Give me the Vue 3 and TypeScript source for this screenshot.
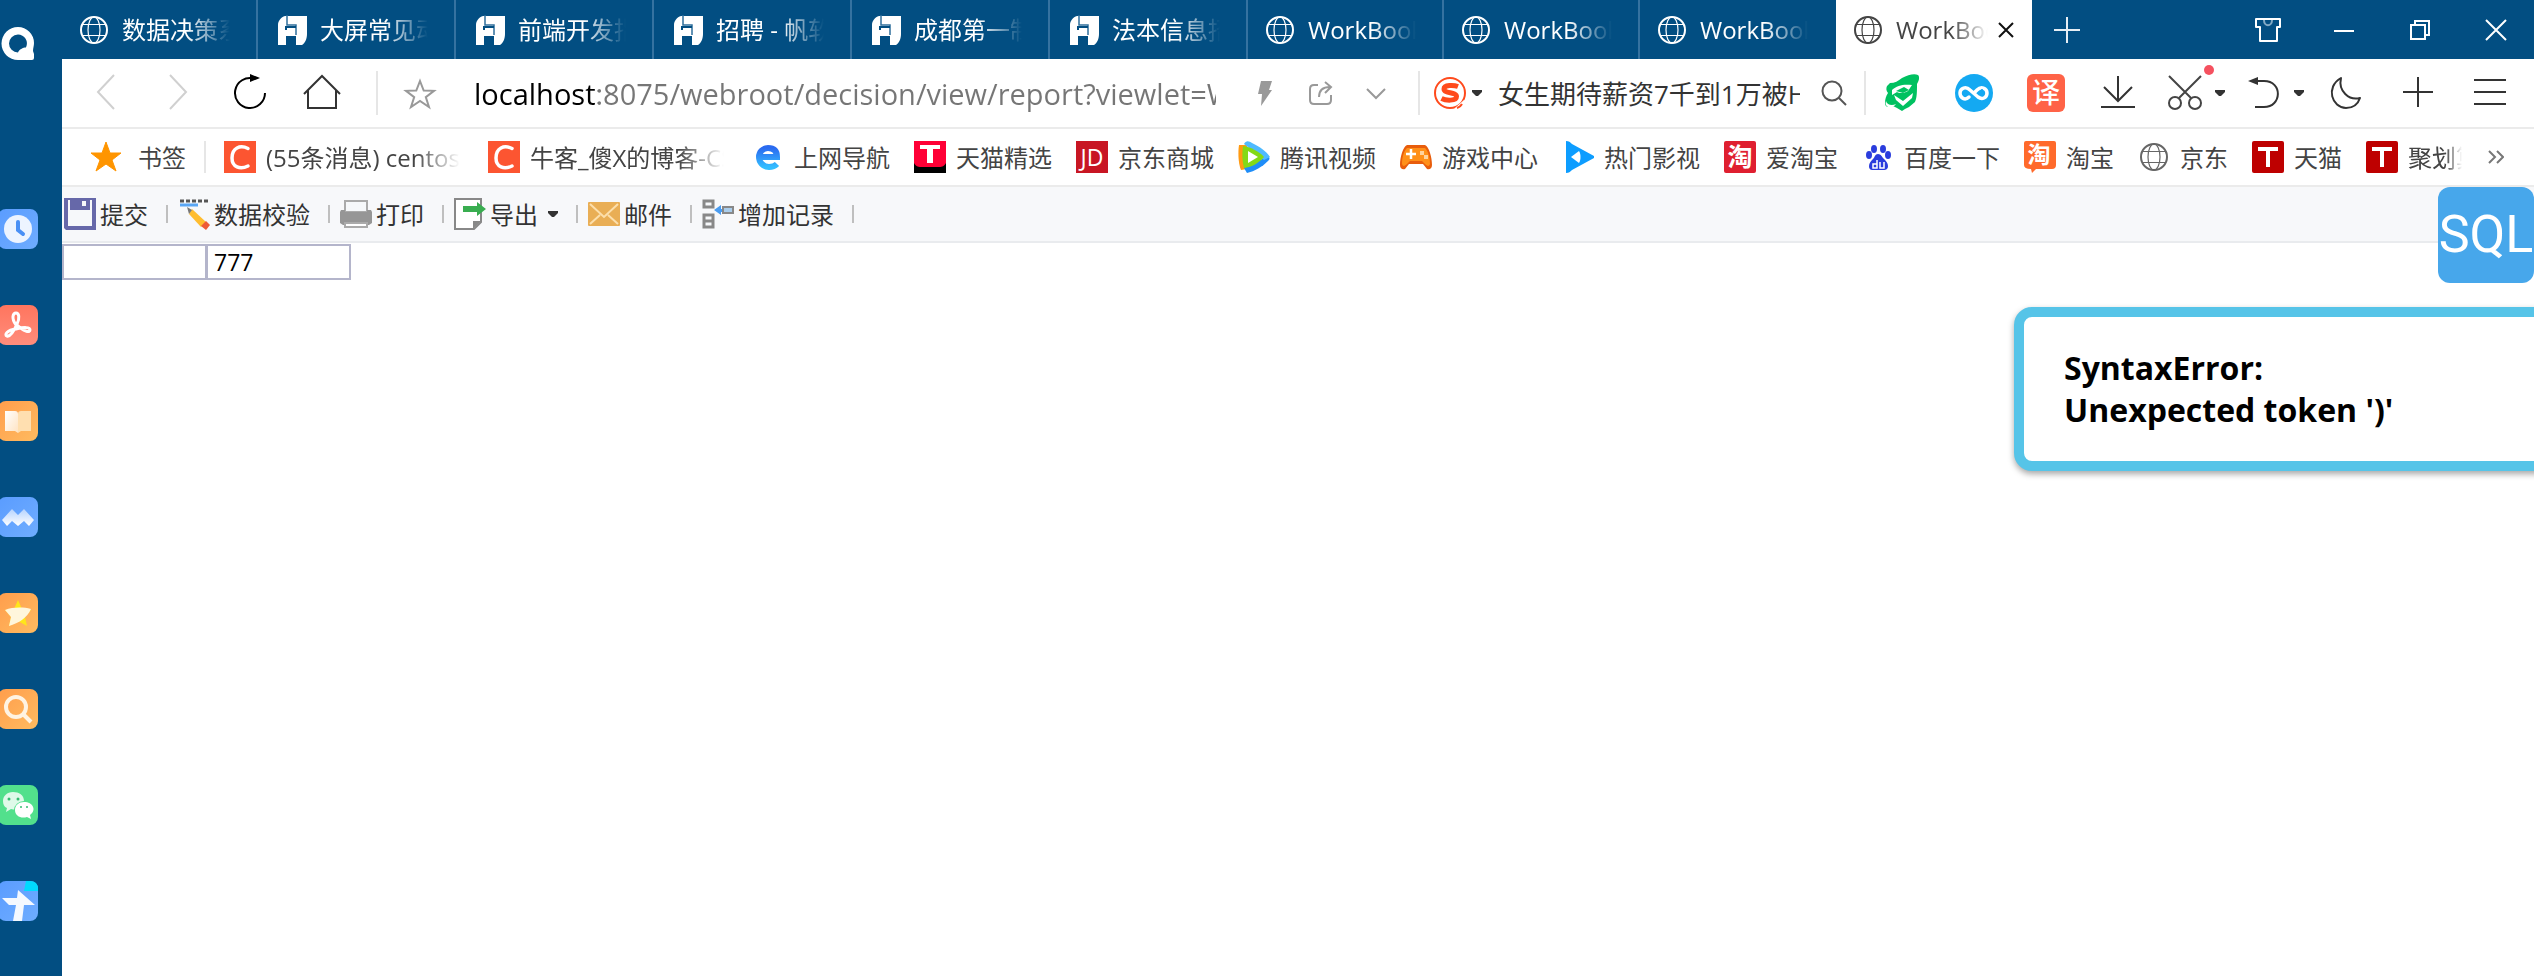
<script setup lang="ts">
import { ref } from 'vue'

interface Tab { icon: string; title: string; wide: boolean; active?: boolean }
interface Entry { icon: string; label: string }

const tabs: Tab[] = [
  { icon: 'globe', title: '数据决策系统', wide: false },
  { icon: 'fan', title: '大屏常见动画', wide: true },
  { icon: 'fan', title: '前端开发指南', wide: true },
  { icon: 'fan', title: '招聘 - 帆软', wide: true },
  { icon: 'fan', title: '成都第一制造', wide: true },
  { icon: 'fan', title: '法本信息招聘', wide: true },
  { icon: 'globe', title: 'WorkBook1', wide: false },
  { icon: 'globe', title: 'WorkBook1', wide: false },
  { icon: 'globe', title: 'WorkBook1', wide: false },
  { icon: 'globe', title: 'WorkBook1', wide: false, active: true },
]

const bookmarks: Entry[] = [
  { icon: 'csdn', label: '(55条消息) centos7' },
  { icon: 'csdn', label: '牛客_傻X的博客-CSDN' },
  { icon: 'edge', label: '上网导航' },
  { icon: 'tmall-pick', label: '天猫精选' },
  { icon: 'jd', label: '京东商城' },
  { icon: 'tencent', label: '腾讯视频' },
  { icon: 'game', label: '游戏中心' },
  { icon: 'movie', label: '热门影视' },
  { icon: 'ai-tao', label: '爱淘宝' },
  { icon: 'baidu', label: '百度一下' },
  { icon: 'taobao', label: '淘宝' },
  { icon: 'globe-sm', label: '京东' },
  { icon: 'tmall', label: '天猫' },
  { icon: 'tmall', label: '聚划算' },
]

const actions: Entry[] = [
  { icon: 'save', label: '提交' },
  { icon: 'verify', label: '数据校验' },
  { icon: 'print', label: '打印' },
  { icon: 'export', label: '导出' },
  { icon: 'mail', label: '邮件' },
  { icon: 'append', label: '增加记录' },
]

const sideApps: Entry[] = [
  { icon: 'clock', label: '历史' },
  { icon: 'pdf', label: 'PDF' },
  { icon: 'book', label: '阅读' },
  { icon: 'wave', label: '文档' },
  { icon: 'fav', label: '收藏' },
  { icon: 'find', label: '搜索' },
  { icon: 'wechat', label: '微信' },
  { icon: 'bird', label: '应用' },
]

const address = ref('localhost:8075/webroot/decision/view/report?viewlet=WorkBook1.cpt')
const query = ref('女生期待薪资7千到1万被HR')
const cells = ref<string[]>(['', '777'])
</script>

<template>
  <svg class="sprite" aria-hidden="true">
    <defs>
      <linearGradient id="g-blue" x1="0" y1="0" x2="1" y2="1"><stop offset="0" stop-color="#5a9cff" /><stop offset="1" stop-color="#6fadff" /></linearGradient>
      <linearGradient id="g-red" x1="0" y1="0" x2="0" y2="1"><stop offset="0" stop-color="#ff755e" /><stop offset="1" stop-color="#ff8d7c" /></linearGradient>
      <linearGradient id="g-orange" x1="0" y1="0" x2="1" y2="1"><stop offset="0" stop-color="#ff9d4c" /><stop offset="1" stop-color="#ffbb60" /></linearGradient>
      <linearGradient id="g-white" x1="0" y1="0" x2="1" y2="1"><stop offset="0" stop-color="#fff" /><stop offset="1" stop-color="#ffe3c2" /></linearGradient>
      <linearGradient id="g-edge" x1="0" y1="0" x2="0" y2="1"><stop offset="0" stop-color="#2a6af0" /><stop offset="1" stop-color="#35bdff" /></linearGradient>
      <linearGradient id="g-wave" x1="0" y1="0" x2="0" y2="1"><stop offset="0" stop-color="#b5d3ff" /><stop offset="1" stop-color="#fff" /></linearGradient>
    </defs>

    <symbol id="globe" viewBox="0 0 32 32">
      <g fill="none" stroke="currentColor"><circle cx="16" cy="16" r="13" stroke-width="2" /><g stroke-width="1.2"><ellipse cx="16" cy="16" rx="6" ry="13" /><path d="M5 10.5h22M5 21.5h22" /></g></g>
    </symbol>
    <symbol id="globe-sm" viewBox="0 0 32 32">
      <g fill="none" stroke="#666"><circle cx="16" cy="16" r="13" stroke-width="2" /><g stroke-width="1.2"><ellipse cx="16" cy="16" rx="6" ry="13" /><path d="M5 10.5h22M5 21.5h22" /></g></g>
    </symbol>
    <symbol id="fan" viewBox="0 0 32 32">
      <path fill="#fff" d="M9 2h22v18c0 5-2 9-5 11h-6V22H10v9H2V11C2 7 5 3 9 2z" />
      <path fill="none" stroke="#2f6f9c" stroke-width="1.5" d="M11 1v10h9v10" />
      <path fill="#024e82" d="M9 12h11v2h-9v2H9z" />
    </symbol>
    <symbol id="q" viewBox="0 0 34 34">
      <path fill="#fff" fill-rule="evenodd" d="M17 0a16 16 0 0 1 16 16c0 3-1 5-1 8l1 3v4q0 2-2 2H17A16 16 0 0 1 17 0zM17 7.500a9 9 0 1 0 0 18c1-3 5-5 8-5a9 9 0 0 0-8-13z" />
    </symbol>

    <symbol id="back" viewBox="0 0 40 40"><path fill="none" stroke="#d0d0d0" stroke-width="2" d="M28 2 12 19l16 17" /></symbol>
    <symbol id="forward" viewBox="0 0 40 40"><path fill="none" stroke="#d0d0d0" stroke-width="2" d="M12 2l16 17-16 17" /></symbol>
    <symbol id="reload" viewBox="0 0 40 40"><path fill="none" stroke="#000" stroke-width="2" d="M24 5.500A15 15 0 1 0 35 20" /><path d="M20 1v8l10-4z" /></symbol>
    <symbol id="home" viewBox="0 0 40 40"><path fill="none" stroke="#333" stroke-width="2" d="M2 21 20 3l18 18M6 17v18h28V17" /></symbol>
    <symbol id="star-o" viewBox="0 0 40 40"><path fill="none" stroke="#999" stroke-width="2" d="M20 8l3.700 9.500 10.300.3-8.200 6.300L29 34l-9-6-9 6 3.200-9.900L6 17.800l10.300-.3z" /></symbol>
    <symbol id="bolt" viewBox="0 0 40 40"><path fill="#999" d="M17 8h11l-3 9h3L17 33l1-12h-4z" /></symbol>
    <symbol id="share" viewBox="0 0 40 40"><path fill="none" stroke="#999" stroke-width="2" d="M18 12h-4q-4 0-4 4v11q0 4 4 4h13q4 0 4-4v-5M19 24c0-7 4-10 11-10M25 9l6 5-6 6" /></symbol>
    <symbol id="chev" viewBox="0 0 40 40"><path fill="none" stroke="#999" stroke-width="2" d="M11 16l9 9 9-9" /></symbol>
    <symbol id="caret" viewBox="0 0 10 6"><path fill="#333" d="M0 0h10v2L6 6H4L0 2z" /></symbol>
    <symbol id="sogou" viewBox="0 0 32 32">
      <circle cx="16" cy="16" r="15" fill="none" stroke="#ff4a1c" stroke-width="2" /><path stroke="#fff" stroke-width="3" d="M22 32l9-8" />
      <path fill="none" stroke="#ff4a1c" stroke-width="5" d="M24 9.500c-4-1.500-14-2-14 2.500 0 5 12.500 2.500 12.500 7.500 0 5-11 4-15 2" /><path stroke="#ff4a1c" stroke-width="2" d="M23 31c3-1 4-2 5-4" />
    </symbol>
    <symbol id="lens" viewBox="0 0 40 40"><g fill="none" stroke="#555" stroke-width="2"><circle cx="18" cy="18" r="9.500" /><path d="M25 25l7 7" /></g></symbol>
    <symbol id="guard" viewBox="0 0 40 40">
      <path fill="#00c160" d="M5 13l3-3c5 0 8-2 12-5 6-3 12-5 16-3 2 2 1 6-1 9 0 7 0 14-2 18l-6 5-4 2-3 2-5-3-4-2c-5 2-8 1-8-3 0-4 1-7 3-10-2-2-2-5-1-7z" />
      <path fill="#fff" d="M10 17c5-5 12-6 20-5l-4 6c-3 2-8 3-11 1l-5 3zM12 22l9 6 10-8-1 5-9 8-7-6zM4 28c1 4 6 5 10 3-2 3-6 4-8 3s-3-3-2-6z" /><path fill="#00c160" d="M14 18l8-4 5 3-6 3z" />
    </symbol>
    <symbol id="infinity" viewBox="0 0 40 40">
      <circle cx="20" cy="20" r="19" fill="#14a9f2" />
      <path fill="none" stroke="#fff" stroke-width="3.500" stroke-linecap="round" d="M15 24c-4 4-9 1-9-4s6-7 10-3l8 7c4 3 9 1 9-4s-6-7-10-3l-2 2" /><circle cx="28" cy="17" r="1" fill="#14a9f2" />
    </symbol>
    <symbol id="translate" viewBox="0 0 40 40">
      <rect x="1" y="1" width="38" height="38" rx="6" fill="#ff6347" /><text x="20" y="30" font-size="28" font-weight="500" text-anchor="middle" fill="#fff">译</text>
    </symbol>
    <symbol id="download" viewBox="0 0 40 40"><path fill="none" stroke="#333" stroke-width="2" d="M20 3v25M6 14l14 14 14-14M3 34h34" /></symbol>
    <symbol id="scissors" viewBox="0 0 40 40"><g fill="none" stroke="#444" stroke-width="2"><path d="M4 3l22 22M36 3 14 25" /><circle cx="10" cy="30" r="6" /><circle cx="30" cy="30" r="6" /></g></symbol>
    <symbol id="undo" viewBox="0 0 40 40"><path fill="none" stroke="#333" stroke-width="2" d="M9 8h11c19 0 18 26 0 26h-9" /><path fill="#333" d="M4 8l10-4v8z" /></symbol>
    <symbol id="moon" viewBox="0 0 40 40"><path fill="none" stroke="#333" stroke-width="2" stroke-linejoin="round" d="M15 5C-1 14 6 35 20 35c8 0 12-4 14-10-11 3-22-7-19-20z" /></symbol>
    <symbol id="plus" viewBox="0 0 40 40"><path fill="none" stroke="#333" stroke-width="2" d="M20 4v30M5 19h30" /></symbol>
    <symbol id="menu" viewBox="0 0 40 40"><path fill="none" stroke="#333" stroke-width="2" d="M4 7h32M4 19h32M4 31h32" /></symbol>

    <symbol id="new-tab" viewBox="0 0 32 32"><path stroke="#e6eef4" stroke-width="2" d="M16 3v26M3 16h26" /></symbol>
    <symbol id="cross" viewBox="0 0 16 16"><path stroke="#111" stroke-width="2" d="M1 1l14 14M15 1 1 15" /></symbol>
    <symbol id="shirt" viewBox="0 0 32 32"><path fill="none" stroke="#fff" stroke-width="2" stroke-linejoin="round" d="M4 5h24v8h-3v14H8V13H4z" /><path fill="none" stroke="#82a9c4" stroke-width="2" d="M12 6c0 7 8 7 8 0" /></symbol>
    <symbol id="min" viewBox="0 0 32 32"><path stroke="#fff" stroke-width="2" d="M6 17h20" /></symbol>
    <symbol id="restore" viewBox="0 0 32 32"><path fill="none" stroke="#fff" stroke-width="2" d="M7 11h14v14H7zM11 10V7h14v14h-3" /></symbol>
    <symbol id="close" viewBox="0 0 32 32"><path stroke="#fff" stroke-width="2" d="M6 6l20 20M26 6 6 26" /></symbol>

    <symbol id="star" viewBox="0 0 32 32"><path fill="#ff9500" stroke="#ff9500" stroke-linejoin="round" d="M16 1l4 11h11l-9 7 4 11-10-7-10 7 4-11-9-7h11z" /></symbol>
    <symbol id="csdn" viewBox="0 0 32 32"><path fill="#fc5531" d="M0 0h32v32H0z" /><path fill="none" stroke="#fff" stroke-width="3.500" stroke-linecap="round" d="M24 7.500C16 3.500 8 7 8 17c0 9 8 12 16 8" /></symbol>
    <symbol id="edge" viewBox="0 0 32 32"><path fill="none" stroke="url(#g-edge)" stroke-width="6" d="M8 16h17c0-7-4-9-9-9s-9 4-9 9 4 10 10 10c4 0 6-1 8-3" /></symbol>
    <symbol id="tmall-pick" viewBox="0 0 32 32"><path fill="#ff0036" d="M0 0h32v32H0z" /><path d="M0 22c2 4 5 4 8 4h16c3 0 6 0 8-4v10H0z" /><path fill="#fff" d="M6 4h20v4h-7v14h-6V8H6z" /></symbol>
    <symbol id="jd" viewBox="0 0 32 32"><path fill="#c81623" d="M0 0h32v32H0z" /><text x="16" y="25" font-size="23" text-anchor="middle" fill="#fff">JD</text></symbol>
    <symbol id="tencent" viewBox="0 0 32 32">
      <path fill="#ff9a12" d="M1 4l8 0v24l-6 1C0 22 0 10 1 4z" /><path fill="#1f8df8" d="M6 27l24-12c2 2 2 3 0 5-6 6-13 10-21 12z" /><path fill="#4fbaff" d="M6 3c2-4 5-3 8-1 8 4 14 8 18 14l-6 3z" /><path fill="#83d916" d="M5 5c7 1 16 5 21 11-5 6-12 10-20 11C4 20 4 12 5 5z" /><path fill="#fff" d="M10 10l10 6-10 6z" />
    </symbol>
    <symbol id="game" viewBox="0 0 32 32">
      <path fill="#e85d0c" d="M7 4h18c4 2 7 12 7 20 0 4-3 5-5 4l-4-5H9l-4 5c-2 1-5 0-5-4C0 16 3 6 7 4z" /><path fill="#ff9019" d="M7 7h18c3 3 5 9 5 16-1 3-3 2-5 0l-3-3H10l-3 3c-2 2-4 3-5 0C2 16 4 10 7 7z" /><path stroke="#fff" stroke-width="2.500" d="M11 8v10M6 13h10" /><path fill="#ffd39d" d="M20 10h4v4h-4zM24 14h4v4h-4z" />
    </symbol>
    <symbol id="movie" viewBox="0 0 32 32"><path fill="#0d9dff" d="M4 0c3 0 4 1 6 3l22 12v2L10 29c-2 2-3 3-6 3z" /><path fill="#fff" d="M9 16l8-6c2 3 2 9 0 12z" /></symbol>
    <symbol id="ai-tao" viewBox="0 0 32 32"><rect width="32" height="32" rx="2" fill="#df1f30" /><text x="16" y="25" font-size="25" font-weight="700" text-anchor="middle" fill="#fff">淘</text></symbol>
    <symbol id="baidu" viewBox="0 0 32 32">
      <g fill="#2b3ddd"><ellipse cx="12" cy="8" rx="3" ry="4" /><ellipse cx="21" cy="8" rx="3" ry="4" /><ellipse cx="7" cy="14" rx="3" ry="4" /><ellipse cx="26" cy="14" rx="3" ry="4" /><path d="M16 13c3 0 4 3 6 5s4 4 4 7c0 5-5 4-10 4s-9 1-9-4c0-3 2-5 4-7s2-5 5-5z" /></g>
      <path fill="none" stroke="#fff" stroke-width="1.500" d="M15 19v8h-4v-4h4M18 21v6h4v-6" />
    </symbol>
    <symbol id="taobao" viewBox="0 0 32 32"><path fill="#ff6a2b" d="M2 0h28q2 0 2 2v22q0 4-4 4H12l-4 4-1-4q-7 0-7-4V2q0-2 2-2z" /><text x="15" y="22" font-size="23" font-weight="700" text-anchor="middle" fill="#fff">淘</text></symbol>
    <symbol id="tmall" viewBox="0 0 32 32"><rect width="32" height="32" rx="2" fill="#be0000" /><path fill="#fff" d="M6 6h20v4h-8v16h-4V10H6z" /></symbol>
    <symbol id="more" viewBox="0 0 16 16"><path fill="none" stroke="#777" stroke-width="2" d="M1 2l6 6-6 6M9 2l6 6-6 6" /></symbol>

    <symbol id="save" viewBox="0 0 32 32"><path fill="#6668a9" d="M1 0h31v32H2l-2-2V0z" /><path fill="#f6f8fa" d="M4 2h2v10h20V2h2v26H4z" /><path fill="#6668a9" d="M6 0h20v9l-3 3H9l-3-3z" /><path fill="#f6f8fa" d="M18 3h4v5h-4z" /></symbol>
    <symbol id="verify" viewBox="0 0 32 32"><path stroke="#555" stroke-width="3" stroke-dasharray="4 2" d="M2 3h28" /><path stroke="#5aa7f5" stroke-width="3" d="M2 7h18" /><path fill="#ffbd2f" d="M14 11l14 13-5 5-12-13z" /><path fill="#777" d="M9 9l5 3-3 4z" /><path fill="#ed5b37" d="M28 23l4 4-4 5-5-4z" /></symbol>
    <symbol id="print" viewBox="0 0 32 32"><path fill="#f6f8fa" stroke="#aaa" stroke-width="2" d="M5 3h22v11H5z" /><path fill="#969696" d="M1 12h4v2h22v-2h4l1 2v11l-3 2H3l-3-2V14z" /><path fill="#fff" stroke="#aaa" stroke-width="2" d="M5 25h22v4H5z" /></symbol>
    <symbol id="export" viewBox="0 0 32 32"><path fill="#fff" stroke="#888" stroke-width="2" d="M1 1h26v23l-7 7H1z" /><path fill="#888" d="M27 23h-8v8z" /><path fill="#39ad50" d="M9 8h14V4l9 7-9 7v-4H9z" /></symbol>
    <symbol id="mail" viewBox="0 0 32 32"><rect y="4" width="32" height="24" rx="1" fill="#e9ae55" /><path fill="none" stroke="#fcdfac" stroke-width="2" d="M2 6l14 13L30 6M2 26l10-9M30 26l-10-9" /></symbol>
    <symbol id="append" viewBox="0 0 32 32"><g fill="#f6f8fa" stroke="#888" stroke-width="3"><path d="M2 3h9v6H2zM2 17h9v12H2zM2 23h9" /></g><path fill="#4a9cf0" d="M12 12l7-5v4h3v3h-3v3z" /><path fill="#a9cdec" stroke="#888" stroke-width="2" d="M21 9h10v6H21z" /></symbol>

    <symbol id="clock" viewBox="0 0 40 40"><rect width="40" height="40" rx="8" fill="url(#g-blue)" /><circle cx="20" cy="20" r="14" fill="#edf4ff" /><path fill="none" stroke="#4a90f5" stroke-width="4" stroke-linecap="round" d="M20 13v8l5 4" /></symbol>
    <symbol id="pdf" viewBox="0 0 40 40"><rect width="40" height="40" rx="8" fill="url(#g-red)" /><path fill="none" stroke="#fff" stroke-width="3" d="M18 20c-5-7-3-12 0-12s4 5 1 11C16 26 12 32 9 31s0-6 9-7c8-2 14-2 14 1s-6 2-14-6" /></symbol>
    <symbol id="book" viewBox="0 0 40 40"><rect width="40" height="40" rx="8" fill="url(#g-orange)" /><path fill="url(#g-white)" d="M7 10h10q3 0 3 3v19l-3-2H7z" /><path fill="#ffdfb0" d="M33 10H23q-3 0-3 3v19l3-2h10z" /></symbol>
    <symbol id="wave" viewBox="0 0 40 40"><rect width="40" height="40" rx="8" fill="url(#g-blue)" /><path fill="url(#g-wave)" d="M4 23l10-11 6 6 6-6 10 11-5 6-5-5-6 5-6-5-5 5z" /></symbol>
    <symbol id="fav" viewBox="0 0 40 40"><rect width="40" height="40" rx="8" fill="url(#g-orange)" /><path fill="#ffe51a" d="M20 7l4 9 9 1-6 7 2 9-9-5-9 5 2-9-6-7 9-1z" /><path fill="#fff6dc" d="M7 17c8-3 18-3 26-1-4 9-12 14-22 17l2-9z" /></symbol>
    <symbol id="find" viewBox="0 0 40 40"><rect width="40" height="40" rx="8" fill="url(#g-orange)" /><g fill="none" stroke="#fff3e2" stroke-width="4"><circle cx="18" cy="18" r="10" /><path d="M25 25l8 8" /></g></symbol>
    <symbol id="wechat" viewBox="0 0 40 40"><rect width="40" height="40" rx="8" fill="#52e08c" /><path fill="#dff9e9" d="M15 7c-6 0-10 4-10 9 0 3 1 6 4 7l-1 4 5-3c8 2 13-2 13-8s-5-9-11-9z" /><ellipse cx="26" cy="25" rx="10" ry="9" fill="#52e08c" /><path fill="#fff" d="M26 17c-5 0-9 3-9 8 0 6 6 9 12 7l4 2-1-4c7-5 3-13-6-13z" /><g fill="#35bd70"><circle cx="11" cy="14" r="1.500" /><circle cx="20" cy="14" r="1.500" /><circle cx="23" cy="22" r="1" /><circle cx="29" cy="22" r="1" /></g></symbol>
    <symbol id="bird" viewBox="0 0 40 40"><rect width="40" height="40" rx="8" fill="url(#g-blue)" /><path fill="#00daff" d="M28 0h4q8 0 8 8v2H26z" /><path fill="#f5f9ff" d="M20 9l17 15H26l-2 16h-9l3-16h-7l-7-7h15z" /></symbol>
  </svg>

  <div class="browser">
    <nav class="side" aria-label="侧边栏">
      <a class="logo" href="#" aria-label="主页"><svg><use href="#q" /></svg></a>
      <button v-for="a in sideApps" :key="a.icon" class="app-btn" type="button" :aria-label="a.label"><svg><use :href="'#' + a.icon" /></svg></button>
    </nav>

    <div class="window">
      <header class="tabbar">
        <button v-for="(t, i) in tabs" :key="i" type="button" class="tab" :class="{ wide: t.wide, active: t.active }">
          <svg class="i32"><use :href="'#' + t.icon" /></svg>
          <span class="tab-title">{{ t.title }}</span>
          <svg v-if="t.active" class="i16"><use href="#cross" /></svg>
        </button>
        <button class="add-tab" type="button" aria-label="新建标签页"><svg class="i32"><use href="#new-tab" /></svg></button>
        <div class="win-controls">
          <button v-for="c in ['shirt', 'min', 'restore', 'close']" :key="c" type="button" :aria-label="c"><svg class="i32"><use :href="'#' + c" /></svg></button>
        </div>
      </header>

      <div class="navbar">
        <button v-for="n in ['back', 'forward', 'reload', 'home']" :key="n" type="button" class="nav-btn" :aria-label="n"><svg class="i40"><use :href="'#' + n" /></svg></button>
        <i class="rule first" />
        <button type="button" class="fav-btn" aria-label="收藏"><svg class="i40"><use href="#star-o" /></svg></button>
        <input v-model="address" class="address" type="text" aria-label="地址" spellcheck="false">
        <div class="addr-tools">
          <button v-for="n in ['bolt', 'share', 'chev']" :key="n" type="button" :aria-label="n"><svg class="i40"><use :href="'#' + n" /></svg></button>
        </div>
        <i class="rule" />
        <button type="button" class="engine" aria-label="搜索引擎"><svg class="i32"><use href="#sogou" /></svg><svg class="caret"><use href="#caret" /></svg></button>
        <input v-model="query" class="search" type="text" aria-label="搜索" spellcheck="false">
        <button type="button" class="lens" aria-label="搜索"><svg class="i40"><use href="#lens" /></svg></button>
        <i class="rule" />
        <button v-for="n in ['guard', 'infinity', 'translate', 'download']" :key="n" type="button" class="ext" :aria-label="n"><svg class="i40"><use :href="'#' + n" /></svg></button>
        <button type="button" class="ext split cut" aria-label="截图"><svg class="i40"><use href="#scissors" /></svg><svg class="caret"><use href="#caret" /></svg><b class="dot" /></button>
        <button type="button" class="ext split" aria-label="恢复"><svg class="i40"><use href="#undo" /></svg><svg class="caret"><use href="#caret" /></svg></button>
        <button v-for="n in ['moon', 'plus', 'menu']" :key="n" type="button" class="ext" :aria-label="n"><svg class="i40"><use :href="'#' + n" /></svg></button>
      </div>

      <div class="bookmarks">
        <button type="button" class="bm-root"><svg class="i32"><use href="#star" /></svg><span>书签</span></button>
        <i class="rule short" />
        <div class="bm-list">
          <a v-for="(b, i) in bookmarks" :key="i" href="#" class="bm" :class="{ long: i < 2, last: i === bookmarks.length - 1 }"><svg class="i32"><use :href="'#' + b.icon" /></svg><span>{{ b.label }}</span></a>
        </div>
        <button type="button" class="bm-more" aria-label="更多书签"><svg class="i16"><use href="#more" /></svg></button>
      </div>

      <div class="report-bar">
        <button v-for="a in actions" :key="a.icon" type="button" class="action"><svg class="i32"><use :href="'#' + a.icon" /></svg><span>{{ a.label }}</span><svg v-if="a.icon === 'export'" class="caret"><use href="#caret" /></svg></button>
      </div>

      <main class="sheet">
        <input v-for="(_, i) in cells" :key="i" v-model="cells[i]" type="text" class="cell" :aria-label="'单元格 ' + (i + 1)">
      </main>
    </div>

    <button type="button" class="sql">SQL</button>
    <div class="toast" role="alert">SyntaxError:<br>Unexpected token ')'</div>
  </div>
</template>

<style>
body { margin: 0; background: #fff; }
</style>

<style scoped>
.sprite { position: absolute; width: 0; height: 0; }
.sprite, .browser { font-family: "Open Sans", "Noto Sans CJK SC", sans-serif; }
button, input { font: inherit; color: inherit; border: 0; padding: 0; margin: 0; background: none; outline: 0; box-sizing: border-box; }
button { display: flex; align-items: center; justify-content: center; flex: none; }
a { color: inherit; text-decoration: none; }
svg { flex: none; display: block; }
.i40 { width: 40px; height: 40px; }
.i32 { width: 32px; height: 32px; }
.i16 { width: 16px; height: 16px; }
.caret { width: 10px; height: 6px; }

.browser { position: relative; display: flex; min-height: 100vh; overflow: hidden; font-size: 24px; line-height: 32px; color: #333; background: #fff; }
.side { width: 62px; flex: none; background: #024e82; }
.logo { display: block; margin: 27px 0 148px 1px; width: 34px; height: 34px; }
.logo svg { width: 34px; height: 34px; }
.app-btn { margin: 0 0 56px -2px; width: 40px; height: 40px; }
.app-btn svg { width: 40px; height: 40px; }
.window { flex: 1; min-width: 0; }

.tabbar { display: flex; height: 59px; background: #024e82; color: #fff; }
.tab { flex: 0 1 196px; min-width: 0; padding: 0 18px 0 16px; gap: 12px; justify-content: flex-start; border-right: 2px solid #3572a0; text-align: left; }
.tab.wide { flex-basis: 198px; padding-left: 18px; }
.tab-title { flex: 0 1 108px; min-width: 0; overflow: hidden; white-space: nowrap; mask-image: linear-gradient(90deg, #000 60%, transparent); }
.tab.active { background: #fff; color: #444; border-right-color: #fff; padding-right: 16px; }
.tab.active .tab-title { flex-basis: 92px; }
.tab.active .i16 { margin-left: -2px; }
.tab:nth-child(9) { border-right-color: #024e82; }
.add-tab { width: 70px; }
.win-controls { display: flex; margin-left: auto; }
.win-controls button { width: 76px; }

.navbar { display: flex; align-items: center; height: 70px; padding-right: 8px; box-sizing: border-box; border-bottom: 2px solid #ebebeb; }
.nav-btn { width: 72px; }
.nav-btn:first-child { margin-left: 8px; }
.rule { flex: none; width: 2px; height: 44px; background: #e6e6e6; }
.rule.first { margin-left: 18px; }
.rule.short { height: 32px; }
.fav-btn { width: 84px; }
.address { flex: 1; min-width: 0; height: 44px; margin-left: 12px; font-size: 29px; color: transparent; background: linear-gradient(90deg, #000 0 124px, #767676 124px); background-clip: text; -webkit-background-clip: text; }
.addr-tools { display: flex; margin: 0 14px 0 20px; }
.addr-tools button { width: 56px; }
.engine { margin: 0 16px 0 14px; gap: 6px; }
.search { width: 302px; height: 44px; font-size: 26px; }
.lens { width: 60px; margin-left: 4px; }
.ext { width: 72px; }
.split { gap: 10px; width: 72px; }
.cut { position: relative; width: 82px; margin-right: 2px; }
.dot { position: absolute; left: 50px; top: -8px; width: 10px; height: 10px; border-radius: 50%; background: #f5515f; }

.bookmarks { display: flex; align-items: center; height: 58px; box-sizing: border-box; padding: 0 30px 0 28px; border-bottom: 2px solid #ebebeb; color: #444; }
.bm-root { gap: 16px; }
.bookmarks .rule { margin: 0 18px; }
.bm-list { display: flex; flex: 1; min-width: 0; gap: 24px; overflow: hidden; }
.bm { display: flex; align-items: center; flex: none; gap: 10px; }
.bm span { white-space: nowrap; overflow: hidden; }
.bm span, .bm-root span, .action span { padding-top: 2px; }
.bm.long span { width: 198px; mask-image: linear-gradient(90deg, #000 75%, transparent 98%); }
.bm.last { flex: 0 1 96px; min-width: 0; }
.bm.last span { mask-image: linear-gradient(90deg, #000 70%, transparent); }
.bm-more { margin-left: 26px; }

.report-bar { display: flex; align-items: center; height: 56px; box-sizing: border-box; background: #f7f8fa; border-bottom: 2px solid #e9ebee; }
.action { gap: 4px; padding: 0 0 0 2px; }
.action .caret { margin-left: 6px; }
.action::after { content: ""; width: 2px; height: 18px; margin: 0 8px 0 14px; background: #bfbfbf; }
.sheet { display: flex; padding-top: 1px; }
.cell { width: 145px; height: 36px; padding: 0 6px; border: 2px solid #b4b5cb; font-size: 23px; color: #000; }
.cell + .cell { margin-left: -1px; }

.sql { position: absolute; right: 0; top: 187px; width: 96px; height: 96px; border-radius: 12px; background: #47a7eb; color: #fff; font: 52px/98px "Liberation Sans Narrow", "Roboto", sans-serif; }
.toast { position: absolute; right: -30px; top: 307px; width: 550px; height: 164px; box-sizing: border-box; padding: 30px 40px; border: 10px solid #56c4e8; border-radius: 18px; background: #fff; box-shadow: 0 3px 6px rgba(0, 0, 0, .35); color: #000; font-size: 32px; font-weight: 700; line-height: 42px; }
</style>
